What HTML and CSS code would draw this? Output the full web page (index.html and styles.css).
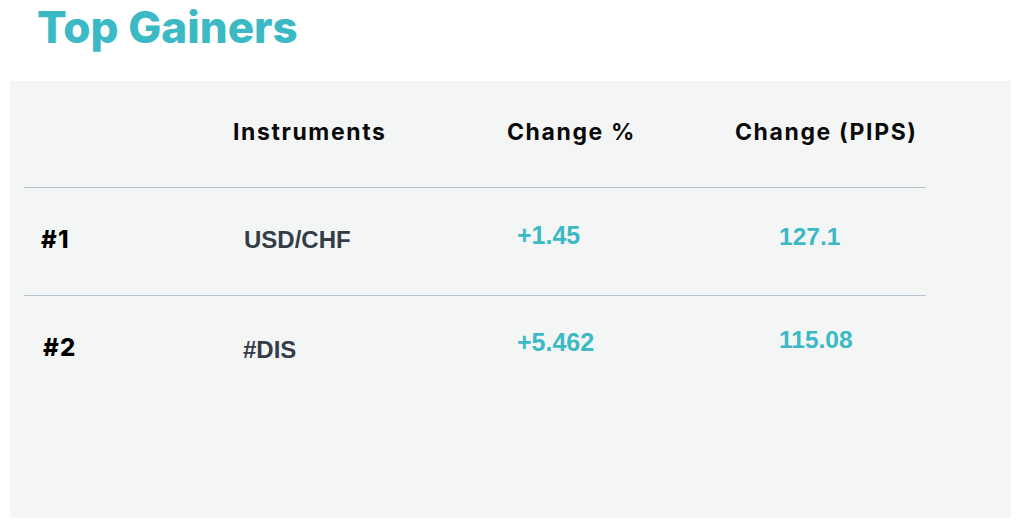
FILE: index.html
```html
<!DOCTYPE html>
<html lang="en">
<head>
<meta charset="utf-8">
<title>Top Gainers</title>
<link rel="stylesheet" href="styles.css">
</head>
<body>
<h1 class="title">Top Gainers</h1>
<section class="panel">
  <div class="table">
    <div class="row head">
      <div class="cell c1"></div>
      <div class="cell c2 th">Instruments</div>
      <div class="cell c3 th">Change %</div>
      <div class="cell c4 th">Change (PIPS)</div>
    </div>
    <div class="row r1">
      <div class="cell c1 rank">#1</div>
      <div class="cell c2 inst">USD/CHF</div>
      <div class="cell c3 pct">+1.45</div>
      <div class="cell c4 pips">127.1</div>
    </div>
    <div class="row r2">
      <div class="cell c1 rank">#2</div>
      <div class="cell c2 inst">#DIS</div>
      <div class="cell c3 pct">+5.462</div>
      <div class="cell c4 pips">115.08</div>
    </div>
  </div>
</section>
</body>
</html>
```
FILE: styles.css
```css
html, body {
  margin: 0;
  padding: 0;
  background: #ffffff;
}
body {
  width: 1024px;
  height: 527px;
  overflow: hidden;
  font-family: "Liberation Sans", Arial, sans-serif;
}
.title {
  margin: 0;
  padding: 2px 0 0 37px;
  height: 81px;
  box-sizing: border-box;
  font-family: Inter, "Noto Sans", sans-serif;
  font-weight: 800;
  font-size: 44px;
  line-height: 50px;
  color: #3bb9c4;
  letter-spacing: 0px;
}
.panel {
  margin: 0 13px 0 10px;
  height: 437px;
  background: #f4f6f6;
  padding: 0 85px 0 14px;
}
.table {
  display: flex;
  flex-direction: column;
}
.row {
  display: grid;
  grid-template-columns: 209px 274px 228px 191px;
  align-items: start;
}
.head {
  height: 106px;
  border-bottom: 1px solid #b7c4d1;
}
.r1 {
  height: 107px;
  border-bottom: 1px solid #b7c4d1;
}
.th {
  padding-top: 37px;
  font-family: Inter, "Noto Sans", sans-serif;
  font-weight: 700;
  font-size: 23px;
  line-height: 28px;
  letter-spacing: 1.6px;
  color: #0a0a0a;
  white-space: nowrap;
}
.rank {
  font-family: Inter, "Noto Sans", sans-serif;
  font-weight: 800;
  font-size: 24px;
  line-height: 28px;
  letter-spacing: 1.3px;
  color: #000000;
  padding-left: 17px;
}
.inst {
  font-weight: 700;
  font-size: 24px;
  line-height: 28px;
  color: #333d48;
  padding-left: 11px;
}
.pct {
  font-weight: 700;
  font-size: 25px;
  line-height: 28px;
  color: #3bb9c4;
  padding-left: 10px;
}
.pips {
  font-weight: 700;
  font-size: 24.5px;
  line-height: 28px;
  color: #3bb9c4;
  padding-left: 44px;
}
.r1 .rank { padding-top: 38px; }
.r1 .inst { padding-top: 38px; }
.r1 .pct { padding-top: 33px; }
.r1 .pips { padding-top: 35px; }
.r2 .rank { padding-top: 38px; padding-left: 19px; }
.r2 .inst { padding-top: 40px; padding-left: 10px; }
.r2 .pct { padding-top: 32px; }
.r2 .pips { padding-top: 30px; }
```
